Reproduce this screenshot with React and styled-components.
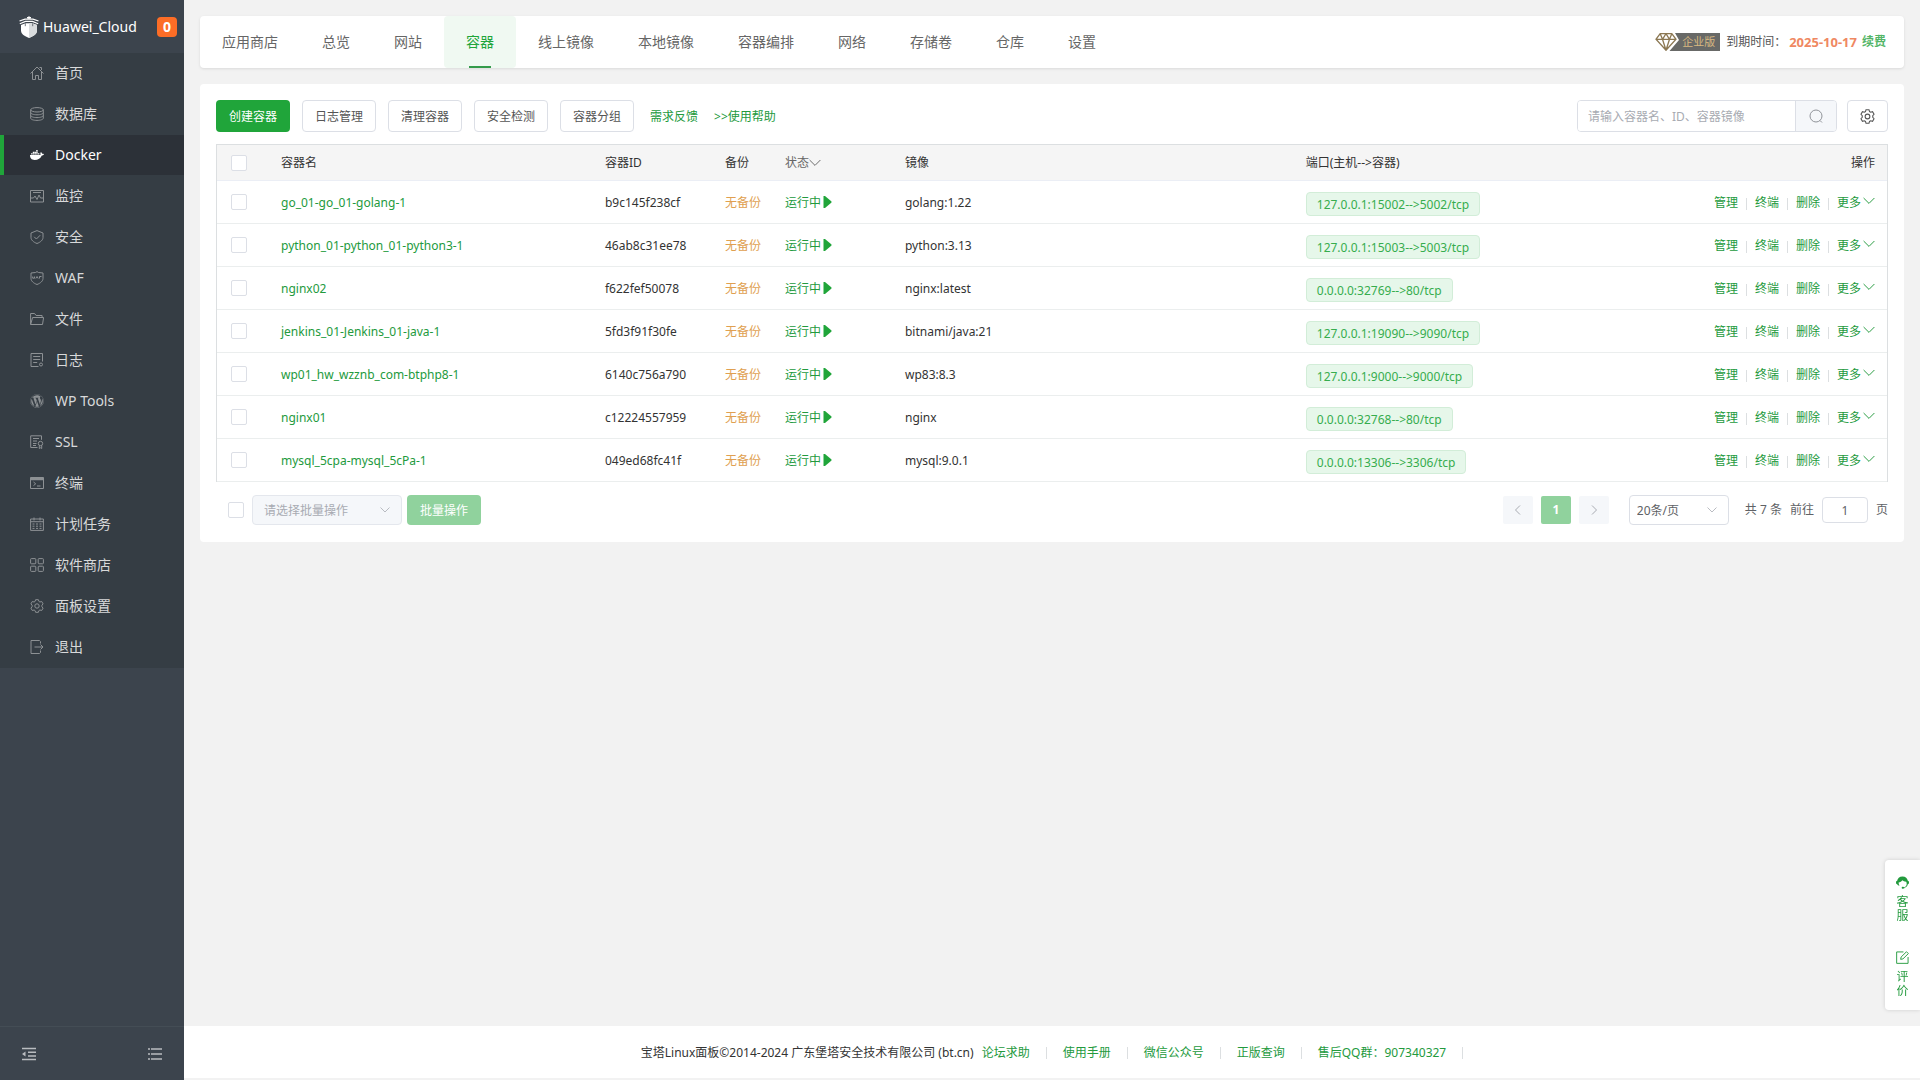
import React, { useState } from "react";
import styled, { createGlobalStyle } from "styled-components";
import { FaDocker, FaWordpress } from "react-icons/fa";

const GlobalStyle = createGlobalStyle`
  * {
    box-sizing: border-box;
  }

  body {
    margin: 0;
    background: #f2f2f2;
    color: #333;
    font-family: "Noto Sans", "Noto Sans CJK SC", sans-serif;
    font-size: 12px;
    line-height: 20px;
  }

  button,
  input,
  select {
    font: inherit;
    color: inherit;
    margin: 0;
  }

  button {
    cursor: pointer;
  }

  a {
    color: #239a3d;
    text-decoration: none;
  }

  svg {
    display: block;
    flex: none;
  }
`;

const Layout = styled.div`
  display: grid;
  grid-template-columns: 184px minmax(0, 1fr);
  min-height: 100vh;
`;

/* sidebar */

const Sidebar = styled.aside`
  display: flex;
  flex-direction: column;
  background: #3c444d;
`;

const Brand = styled.div`
  display: flex;
  align-items: center;
  height: 53px;
  padding: 0 7px 0 19px;
  color: #fff;
  font-size: 14px;
`;

const BrandName = styled.span`
  flex: 1;
  margin-left: 4px;
`;

const Badge = styled.span`
  width: 20px;
  border-radius: 4px;
  background: #fc6d26;
  font-weight: 700;
  text-align: center;
`;

const Menu = styled.nav`
  display: flex;
  flex-direction: column;
  gap: 1px;
  padding-bottom: 1px;
  background: #353d44;
`;

const MenuItem = styled.a`
  display: flex;
  align-items: center;
  gap: 11px;
  height: 40px;
  padding-left: ${(props) => (props.$active ? "26px" : "30px")};
  border-left: ${(props) => (props.$active ? "4px solid #20a53a" : "none")};
  background: ${(props) => (props.$active ? "#2c3138" : "transparent")};
  color: ${(props) => (props.$active ? "#fff" : "#d8d9da")};
  font-size: 14px;

  svg {
    color: ${(props) => (props.$active ? "#fff" : "#8d9194")};
  }
`;

const SidebarTools = styled.div`
  display: flex;
  justify-content: space-between;
  align-items: center;
  height: 54px;
  margin-top: auto;
  padding: 0 22px;
  border-top: 1px solid #444d55;
`;

const ToolButton = styled.button`
  padding: 0;
  border: none;
  background: none;
  color: #b9bcc0;
`;

/* page */

const Page = styled.div`
  display: flex;
  flex-direction: column;
`;

const Content = styled.main`
  display: flex;
  flex-direction: column;
  gap: 16px;
  padding: 16px;
`;

const Card = styled.section`
  border-radius: 4px;
  background: #fff;
`;

const TopBar = styled(Card)`
  display: flex;
  justify-content: space-between;
  height: 52px;
  padding-right: 18px;
  box-shadow: 0 1px 3px rgba(0, 0, 0, 0.1);
`;

const Tabs = styled.nav`
  display: flex;
`;

const Tab = styled.a`
  display: flex;
  flex-direction: column;
  align-items: center;
  padding: 16px 22px 0;
  border-radius: 4px;
  background: ${(props) => (props.$active ? "#f0f9f2" : "transparent")};
  color: ${(props) => (props.$active ? "#20a53a" : "#666")};
  font-size: 14px;

  &::after {
    content: "";
    width: 22px;
    height: 2px;
    margin-top: auto;
    background: ${(props) => (props.$active ? "#349b4b" : "transparent")};
  }
`;

const License = styled.div`
  display: flex;
  align-items: center;
  color: #555;
`;

const Edition = styled.span`
  display: flex;
  align-items: center;
  margin-right: 6px;
`;

const EditionName = styled.span`
  height: 18px;
  padding-right: 5px;
  background: #686967;
  color: #d9b981;
  font-size: 11px;
  line-height: 18px;
`;

const Expiry = styled.b`
  margin: 0 5px 0 3px;
  color: #ef8862;
  font-size: 13px;
`;

const RenewLink = styled.a`
  font-weight: 700;
  color: #53b567;
`;

const Panel = styled(Card)`
  padding: 16px;
`;

const Toolbar = styled.div`
  display: flex;
  align-items: center;
  gap: 12px;
  margin-bottom: 12px;
`;

const Button = styled.button`
  height: ${(props) => (props.$small ? "30px" : "32px")};
  padding: 2px 12px 0;
  border: 1px solid ${(props) => (props.$primary ? "transparent" : "#dcdfe6")};
  border-radius: 4px;
  background: ${(props) => (props.$primary ? "#20a53a" : "#fff")};
  color: ${(props) => (props.$primary ? "#fff" : "#555")};

  &:disabled {
    background: #90d29d;
  }
`;

const HelpLinks = styled.div`
  display: flex;
  gap: 16px;
  margin-left: 4px;
  padding-top: 2px;
`;

const ToolbarRight = styled.div`
  display: flex;
  gap: 10px;
  margin-left: auto;
`;

const Search = styled.form`
  display: flex;
  width: 260px;
  height: 32px;
  border: 1px solid #dcdfe6;
  border-radius: 4px;
  overflow: hidden;
`;

const SearchInput = styled.input`
  flex: 1;
  min-width: 0;
  padding: 2px 10px 0;
  border: none;
  outline: none;

  &::placeholder {
    color: #a8abb2;
    opacity: 1;
  }
`;

const SearchButton = styled.button`
  display: flex;
  justify-content: center;
  align-items: center;
  width: 41px;
  padding: 0;
  border: none;
  border-left: 1px solid #dcdfe6;
  background: #f5f7fa;
  color: #909399;
`;

const IconButton = styled(Button)`
  display: flex;
  align-items: center;
  padding: 0 12px;
`;

const Table = styled.table`
  width: 100%;
  table-layout: fixed;
  border: 1px solid #dcdfe1;
  border-bottom: none;
  border-collapse: separate;
  border-spacing: 0;
`;

const Th = styled.th`
  height: 36px;
  padding: 0 ${(props) => (props.$last ? "12px" : "10px")} 0 10px;
  border-bottom: 1px solid #ebeef5;
  background: #f5f5f5;
  font-weight: 400;
  text-align: ${(props) => (props.$last ? "right" : "left")};
`;

const Td = styled.td`
  height: 43px;
  padding: 2px ${(props) => (props.$last ? "12px" : "10px")} 0 10px;
  border-bottom: 1px solid #ebeeee;
  overflow: hidden;
  white-space: nowrap;
`;

const CheckTd = styled(Td)`
  padding-top: 0;
`;

const Checkbox = styled.input.attrs({ type: "checkbox" })`
  display: block;
  appearance: none;
  width: 16px;
  height: 16px;
  margin-left: ${(props) => (props.$cell ? "4px" : "0")};
  border: 1px solid #dcdfe6;
  border-radius: 2px;
  background: #fff;

  &:checked {
    border-color: #20a53a;
    background: #20a53a;
  }
`;

const SortButton = styled.button`
  display: flex;
  align-items: center;
  padding: 0;
  border: none;
  background: none;
  color: #666;
`;

const Backup = styled.a`
  color: #e0a050;
`;

const Status = styled.a`
  display: flex;
  align-items: center;
  gap: 2px;

  svg {
    margin-bottom: 2px;
  }
`;

const PortTag = styled.span`
  display: inline-block;
  height: 24px;
  margin-top: 2px;
  padding: 0 10px;
  border: 1px solid #d2edd8;
  border-radius: 4px;
  background: #e6f7ea;
  color: #36ad4e;
  line-height: 24px;
  vertical-align: middle;
`;

const Actions = styled.div`
  display: flex;
  justify-content: flex-end;
  align-items: center;
`;

const Action = styled.a`
  display: flex;
  gap: 2px;

  & + & {
    margin-left: 8px;
  }

  & + &::before {
    content: "";
    width: 1px;
    height: 12px;
    margin: 5px 6px 0 0;
    background: #dcdfe1;
  }

  svg {
    margin-top: 2px;
  }
`;

const TableFooter = styled.div`
  display: flex;
  align-items: center;
  padding: 13px 0 1px 12px;
`;

const SelectBox = styled.label`
  display: grid;
  align-items: center;
  width: ${(props) => props.$width};
  margin: ${(props) => props.$margin};
  color: ${(props) => (props.$muted ? "#a8abb2" : "#606266")};

  svg {
    grid-area: 1 / 1;
    justify-self: end;
    margin-right: 12px;
    color: #a8abb2;
    pointer-events: none;
  }
`;

const Select = styled.select`
  grid-area: 1 / 1;
  appearance: none;
  height: 30px;
  padding: 2px ${(props) => (props.disabled ? "11px" : "7px")} 0;
  border: 1px solid ${(props) => (props.disabled ? "#e4e7ed" : "#dcdfe6")};
  border-radius: 4px;
  background: ${(props) => (props.disabled ? "#f5f7fa" : "#fff")};
  opacity: 1;
`;

const Pagination = styled.div`
  display: flex;
  align-items: center;
  gap: 8px;
  margin-left: auto;
  color: #606266;
`;

const PageButton = styled.button`
  display: flex;
  justify-content: center;
  align-items: center;
  width: 30px;
  height: 28px;
  padding: 0;
  border: none;
  border-radius: 2px;
  background: ${(props) => (props.$current ? "#90d29d" : "#f5f7fa")};
  color: ${(props) => (props.$current ? "#fff" : "#a8abb2")};
  font-weight: 700;
`;

const PageInput = styled.input`
  width: 46px;
  height: 26px;
  border: 1px solid #dcdfe6;
  border-radius: 4px;
  text-align: center;
`;

const Jump = styled.label`
  display: flex;
  align-items: center;
  gap: 8px;
`;

const Footer = styled.footer`
  display: flex;
  justify-content: center;
  align-items: center;
  height: 52px;
  margin: auto 0 2px;
  padding-top: 2px;
  background: #fff;
`;

const FooterLink = styled.a`
  display: flex;
  align-items: center;
  margin-left: ${(props) => (props.$first ? "8px" : "16px")};

  &::after {
    content: "";
    width: 1px;
    height: 12px;
    margin-left: 16px;
    background: #dcdfe1;
  }
`;

const FloatBar = styled.div`
  position: fixed;
  right: 0;
  bottom: 70px;
  display: flex;
  flex-direction: column;
  gap: 28px;
  width: 35px;
  padding: 16px 11px 12px;
  border-radius: 4px 0 0 4px;
  background: #fff;
  box-shadow: 0 0 4px rgba(0, 0, 0, 0.15);
`;

const FloatLink = styled.a`
  display: flex;
  flex-direction: column;
  align-items: center;
  gap: 6px;
  line-height: 14px;
`;

const Icon = ({ size = 14, box = 14, width = 1, children }) => (
  <svg
    width={size}
    height={size}
    viewBox={`0 0 ${box} ${box}`}
    fill="none"
    stroke="currentColor"
    strokeWidth={width}
    aria-hidden="true"
  >
    {children}
  </svg>
);

const ChevronDown = ({ size = 10 }) => (
  <Icon size={size} box={10} width={0.8}>
    <path d="M.5 2.5 5 7 9.5 2.5" />
  </Icon>
);

const GearIcon = ({ size }) => (
  <Icon size={size}>
    <path d="M5.6.7h2.8l.5 1.7 1 .6 1.8-.5 1.4 2.4L11.9 6.2v1.6l1.2 1.3-1.4 2.4-1.8-.5-1 .6-.5 1.7H5.6l-.5-1.7-1-.6-1.8.5L.9 9.1l1.2-1.3V6.2L.9 4.9l1.4-2.4 1.8.5 1-.6z" />
    <circle cx="7" cy="7" r="2.2" />
  </Icon>
);

const ShieldLogo = () => (
  <svg width="20" height="22" viewBox="0 0 20 22" aria-hidden="true">
    <path
      d="M.5 5 6 3.1h8L19.500 5M.8 7.800 6.500 5.400h7l5.700 2.400M8 1.700h4M10 .3v3"
      fill="none"
      stroke="#fff"
      strokeWidth="1.2"
    />
    <path d="M2 9l4.500-1.800h7L18 9v5.800c0 3-3.600 5.700-8 7.200-4.400-1.500-8-4.200-8-7.200z" fill="#fff" />
    <path d="M10 7.200h3.500L18 9v5.800c0 3-3.600 5.700-8 7.200z" fill="#d9dcde" />
    <path d="M6.300 7.200v3M13.700 7.200v3" stroke="#3c444d" strokeWidth=".7" />
  </svg>
);

const menu = [
  {
    name: "首页",
    icon: (
      <Icon>
        <path d="M.5 7.500 7 1l6.500 6.500M2.500 6v7.500h3v-4h3v4h3V6M9.500 1.500h2v2.500" />
      </Icon>
    ),
  },
  {
    name: "数据库",
    icon: (
      <Icon>
        <ellipse cx="7" cy="2.8" rx="6.3" ry="2.2" />
        <path d="M.7 2.8v8.400c0 1.200 2.800 2.200 6.300 2.200s6.300-1 6.300-2.200V2.800M.7 5.600c0 1.200 2.800 2.200 6.300 2.200s6.300-1 6.300-2.200M.7 8.400c0 1.200 2.800 2.200 6.300 2.200s6.300-1 6.300-2.200" />
      </Icon>
    ),
  },
  { name: "Docker", active: true, icon: <FaDocker size={14} /> },
  {
    name: "监控",
    icon: (
      <Icon>
        <path d="M.5 1.500h13v11.500H.5zM3 3.500h8M.5 9h3l1.500-2 2 3.500L9 6l1.500 3h3" />
      </Icon>
    ),
  },
  {
    name: "安全",
    icon: (
      <Icon>
        <path d="M7 .6 13 3v4.500c0 2.500-2.500 4.700-6 6-3.500-1.300-6-3.500-6-6V3zM4.200 6.800l2.200 2.200 3.800-3.800" />
      </Icon>
    ),
  },
  {
    name: "WAF",
    icon: (
      <Icon>
        <path d="M7 .6 8.500 1.500 13 2v5.500c0 2.500-2.500 4.700-6 6-3.500-1.300-6-3.500-6-6V2l4.500-.5z" />
        <path d="M2.700 5.500v1.700h1.800V5.500M5.800 7.500l1.200-2 1.200 2M9.500 7.500v-2h2" />
      </Icon>
    ),
  },
  {
    name: "文件",
    icon: (
      <Icon>
        <path d="M.6 12.500V1.500h4l1.500 2h6v2M.6 12.500l2-7h11l-1.100 7z" />
      </Icon>
    ),
  },
  {
    name: "日志",
    icon: (
      <Icon>
        <path d="M8.500 13.500H1V.5h11.500v8M3.200 3.500h7M3.200 6.500h7M3.200 9.500h4" />
        <circle cx="11" cy="11.5" r="1.5" />
      </Icon>
    ),
  },
  { name: "WP Tools", icon: <FaWordpress size={14} /> },
  {
    name: "SSL",
    icon: (
      <Icon>
        <path d="M7.500 12.500H.7V.8h10.800v4M3 3.500h6M3 6h4M3 8.500h3.500M3 10.500h3" />
        <circle cx="10.5" cy="8.5" r="2.2" />
        <path d="M9.300 10.500v3l1.200-.7 1.200.7v-3" />
      </Icon>
    ),
  },
  {
    name: "终端",
    icon: (
      <Icon>
        <path d="M.5 1.500h13v11H.5z" />
        <path d="M.5 3h13" strokeWidth="2.5" />
        <path d="m3.500 6 2.200 1.800-2.200 1.800M7 10h3.500" />
      </Icon>
    ),
  },
  {
    name: "计划任务",
    icon: (
      <Icon>
        <path d="M.6 2h12.800v11.400H.6zM.6 4.700h12.800M4 .5v3M10 .5v3M2.500 7h2M6 7h2M9.500 7h2M2.500 9.200h2M6 9.200h2M9.500 9.200h2M2.500 11.400h2M6 11.400h2M9.500 11.400h2" />
      </Icon>
    ),
  },
  {
    name: "软件商店",
    icon: (
      <Icon>
        <rect x=".6" y=".6" width="5.2" height="5.2" rx=".8" />
        <rect x="8.2" y=".6" width="5.2" height="5.2" rx=".8" />
        <rect x=".6" y="8.2" width="5.2" height="5.2" rx=".8" />
        <rect x="8.2" y="8.2" width="5.2" height="5.2" rx=".8" />
      </Icon>
    ),
  },
  { name: "面板设置", icon: <GearIcon /> },
  {
    name: "退出",
    icon: (
      <Icon>
        <path d="M10.500 3.500V1.500l-1-1H1v13h8.500l1-1v-2M4.500 7h8.500M10.500 4.500 13 7l-2.500 2.500" />
      </Icon>
    ),
  },
];

const tabs = [
  "应用商店",
  "总览",
  "网站",
  "容器",
  "线上镜像",
  "本地镜像",
  "容器编排",
  "网络",
  "存储卷",
  "仓库",
  "设置",
];

const containers = [
  { name: "go_01-go_01-golang-1", id: "b9c145f238cf", image: "golang:1.22", port: "127.0.0.1:15002-->5002/tcp" },
  { name: "python_01-python_01-python3-1", id: "46ab8c31ee78", image: "python:3.13", port: "127.0.0.1:15003-->5003/tcp" },
  { name: "nginx02", id: "f622fef50078", image: "nginx:latest", port: "0.0.0.0:32769-->80/tcp" },
  { name: "jenkins_01-Jenkins_01-java-1", id: "5fd3f91f30fe", image: "bitnami/java:21", port: "127.0.0.1:19090-->9090/tcp" },
  { name: "wp01_hw_wzznb_com-btphp8-1", id: "6140c756a790", image: "wp83:8.3", port: "127.0.0.1:9000-->9000/tcp" },
  { name: "nginx01", id: "c12224557959", image: "nginx", port: "0.0.0.0:32768-->80/tcp" },
  { name: "mysql_5cpa-mysql_5cPa-1", id: "049ed68fc41f", image: "mysql:9.0.1", port: "0.0.0.0:13306-->3306/tcp" },
];

const footerLinks = ["论坛求助", "使用手册", "微信公众号", "正版查询", "售后QQ群：907340327"];

const ContainerTable = () => {
  const [selected, setSelected] = useState([]);
  const allSelected = selected.length === containers.length;

  const toggle = (id) => {
    setSelected(
      selected.includes(id)
        ? selected.filter((item) => item !== id)
        : [...selected, id]
    );
  };

  const toggleAll = () => {
    setSelected(allSelected ? [] : containers.map((item) => item.id));
  };

  return (
    <>
      <Table>
        <colgroup>
          <col width="54" />
          <col width="19.4%" />
          <col width="120" />
          <col width="60" />
          <col width="120" />
          <col width="24%" />
          <col />
          <col width="220" />
        </colgroup>
        <thead>
          <tr>
            <Th>
              <Checkbox $cell aria-label="全选" checked={allSelected} onChange={toggleAll} />
            </Th>
            <Th>容器名</Th>
            <Th>容器ID</Th>
            <Th>备份</Th>
            <Th>
              <SortButton>
                状态
                <ChevronDown size={12} />
              </SortButton>
            </Th>
            <Th>镜像</Th>
            <Th>端口(主机--&gt;容器)</Th>
            <Th $last>操作</Th>
          </tr>
        </thead>
        <tbody>
          {containers.map((item) => (
            <tr key={item.id}>
              <CheckTd>
                <Checkbox
                  $cell
                  aria-label={item.name}
                  checked={selected.includes(item.id)}
                  onChange={() => toggle(item.id)}
                />
              </CheckTd>
              <Td>
                <a href="#detail">{item.name}</a>
              </Td>
              <Td>{item.id}</Td>
              <Td>
                <Backup href="#backup">无备份</Backup>
              </Td>
              <Td>
                <Status href="#status">
                  运行中
                  <svg width="9" height="12" viewBox="0 0 9 12" fill="#20a53a" aria-hidden="true">
                    <path d="M.5 0H2l6.500 5.500v1L2 12H.5z" />
                  </svg>
                </Status>
              </Td>
              <Td>{item.image}</Td>
              <Td>
                <PortTag>{item.port}</PortTag>
              </Td>
              <Td $last>
                <Actions>
                  <Action href="#manage">管理</Action>
                  <Action href="#terminal">终端</Action>
                  <Action href="#delete">删除</Action>
                  <Action href="#more">
                    更多
                    <ChevronDown size={12} />
                  </Action>
                </Actions>
              </Td>
            </tr>
          ))}
        </tbody>
      </Table>
      <TableFooter>
        <Checkbox aria-label="全选" checked={allSelected} onChange={toggleAll} />
        <SelectBox $width="150px" $margin="0 5px 0 8px" $muted>
          <Select disabled aria-label="批量操作">
            <option>请选择批量操作</option>
          </Select>
          <ChevronDown />
        </SelectBox>
        <Button $primary $small disabled>
          批量操作
        </Button>
        <Pagination>
          <PageButton aria-label="上一页">
            <Icon size={12} box={12}>
              <path d="M8 1.500 3.500 6 8 10.500" />
            </Icon>
          </PageButton>
          <PageButton $current>1</PageButton>
          <PageButton aria-label="下一页">
            <Icon size={12} box={12}>
              <path d="M4 1.500 8.500 6 4 10.500" />
            </Icon>
          </PageButton>
          <SelectBox $width="100px" $margin="0 8px 0 12px">
            <Select aria-label="每页条数">
              <option>20条/页</option>
            </Select>
            <ChevronDown />
          </SelectBox>
          <span>共 7 条</span>
          <Jump>
            前往
            <PageInput defaultValue="1" />页
          </Jump>
        </Pagination>
      </TableFooter>
    </>
  );
};

const App = () => {
  return (
    <Layout>
      <GlobalStyle />
      <Sidebar>
        <Brand>
          <ShieldLogo />
          <BrandName>Huawei_Cloud</BrandName>
          <Badge>0</Badge>
        </Brand>
        <Menu>
          {menu.map((item) => (
            <MenuItem key={item.name} href="#menu" $active={item.active}>
              {item.icon}
              {item.name}
            </MenuItem>
          ))}
        </Menu>
        <SidebarTools>
          <ToolButton aria-label="收起菜单">
            <Icon width={1.5}>
              <path d="M0 1.500h14M6 5.200h8M6 8.900h8M0 12.500h14" />
              <path d="M0 7 3.500 4.500v5z" fill="currentColor" stroke="none" />
            </Icon>
          </ToolButton>
          <ToolButton aria-label="菜单设置">
            <Icon width={1.5}>
              <path d="M0 2h2M3 2h11M0 7h2M3 7h11M0 12h2M3 12h11" />
            </Icon>
          </ToolButton>
        </SidebarTools>
      </Sidebar>

      <Page>
        <Content>
          <TopBar>
            <Tabs>
              {tabs.map((tab) => (
                <Tab key={tab} href="#tab" $active={tab === "容器"}>
                  {tab}
                </Tab>
              ))}
            </Tabs>
            <License>
              <Edition>
                <svg width="27" height="18" viewBox="0 0 27 18" fill="none" aria-hidden="true">
                  <path d="M20 0h7v18H14.500L24 7z" fill="#686967" />
                  <path
                    d="M5.200.7h11.600L21 6.300 11 17.300 1 6.300zM1 6.300h20M5.200.7l2.300 5.600L11 17.300l3.500-11L16.800.7M7.500 6.300 11 .7l3.500 5.600"
                    stroke="#8c7853"
                    strokeWidth="1.3"
                  />
                </svg>
                <EditionName>企业版</EditionName>
              </Edition>
              到期时间：
              <Expiry>2025-10-17</Expiry>
              <RenewLink href="#renew">续费</RenewLink>
            </License>
          </TopBar>

          <Panel>
            <Toolbar>
              <Button $primary>创建容器</Button>
              <Button>日志管理</Button>
              <Button>清理容器</Button>
              <Button>安全检测</Button>
              <Button>容器分组</Button>
              <HelpLinks>
                <a href="#feedback">需求反馈</a>
                <a href="#help">&gt;&gt;使用帮助</a>
              </HelpLinks>
              <ToolbarRight>
                <Search onSubmit={(e) => e.preventDefault()}>
                  <SearchInput
                    type="text"
                    aria-label="搜索容器"
                    placeholder="请输入容器名、ID、容器镜像"
                  />
                  <SearchButton aria-label="搜索">
                    <Icon>
                      <circle cx="7" cy="7" r="6" />
                      <path d="m11 11.500 2 2" />
                    </Icon>
                  </SearchButton>
                </Search>
                <IconButton aria-label="设置">
                  <GearIcon size={15} />
                </IconButton>
              </ToolbarRight>
            </Toolbar>
            <ContainerTable />
          </Panel>
        </Content>

        <Footer>
          宝塔Linux面板©2014-2024 广东堡塔安全技术有限公司 (bt.cn)
          {footerLinks.map((link, index) => (
            <FooterLink key={link} href="#link" $first={index === 0}>
              {link}
            </FooterLink>
          ))}
        </Footer>
      </Page>

      <FloatBar>
        <FloatLink href="#service">
          <svg width="13" height="13" viewBox="0 0 13 13" fill="currentColor" aria-hidden="true">
            <path d="M6.500.5C9.600.5 11.500 2.500 11.800 4.800c.8.200 1.200.8 1.200 1.700s-.4 1.600-1.200 1.700c-.3 1.800-1.500 3.200-3.300 3.600-.1.600-.7.900-1.500.9s-1.300-.4-1.300-1 .5-1 1.300-1c.6 0 1 .2 1.300.5 1.500-.4 2.400-1.600 2.400-3.200 0-1-.2-1.700-.5-2.300C8.500 5.500 7.200 5 6.400 4.200 5.800 5.400 4 6.200 2.600 6.400c0 1.200.3 2.200 1 3H2.500C1.800 9.100 1.400 8.600 1.200 8.200.4 8.100 0 7.400 0 6.500s.4-1.500 1.200-1.700C1.500 2.500 3.400.5 6.500.5z" />
          </svg>
          <span>客<br />服</span>
        </FloatLink>
        <FloatLink href="#review">
          <Icon size={13}>
            <path d="M8 1H.7v12.300H13V6.500M5 9l.5-2.500L11.300.8l2 2L7.500 8.500z" />
          </Icon>
          <span>评<br />价</span>
        </FloatLink>
      </FloatBar>
    </Layout>
  );
};

export default App;
